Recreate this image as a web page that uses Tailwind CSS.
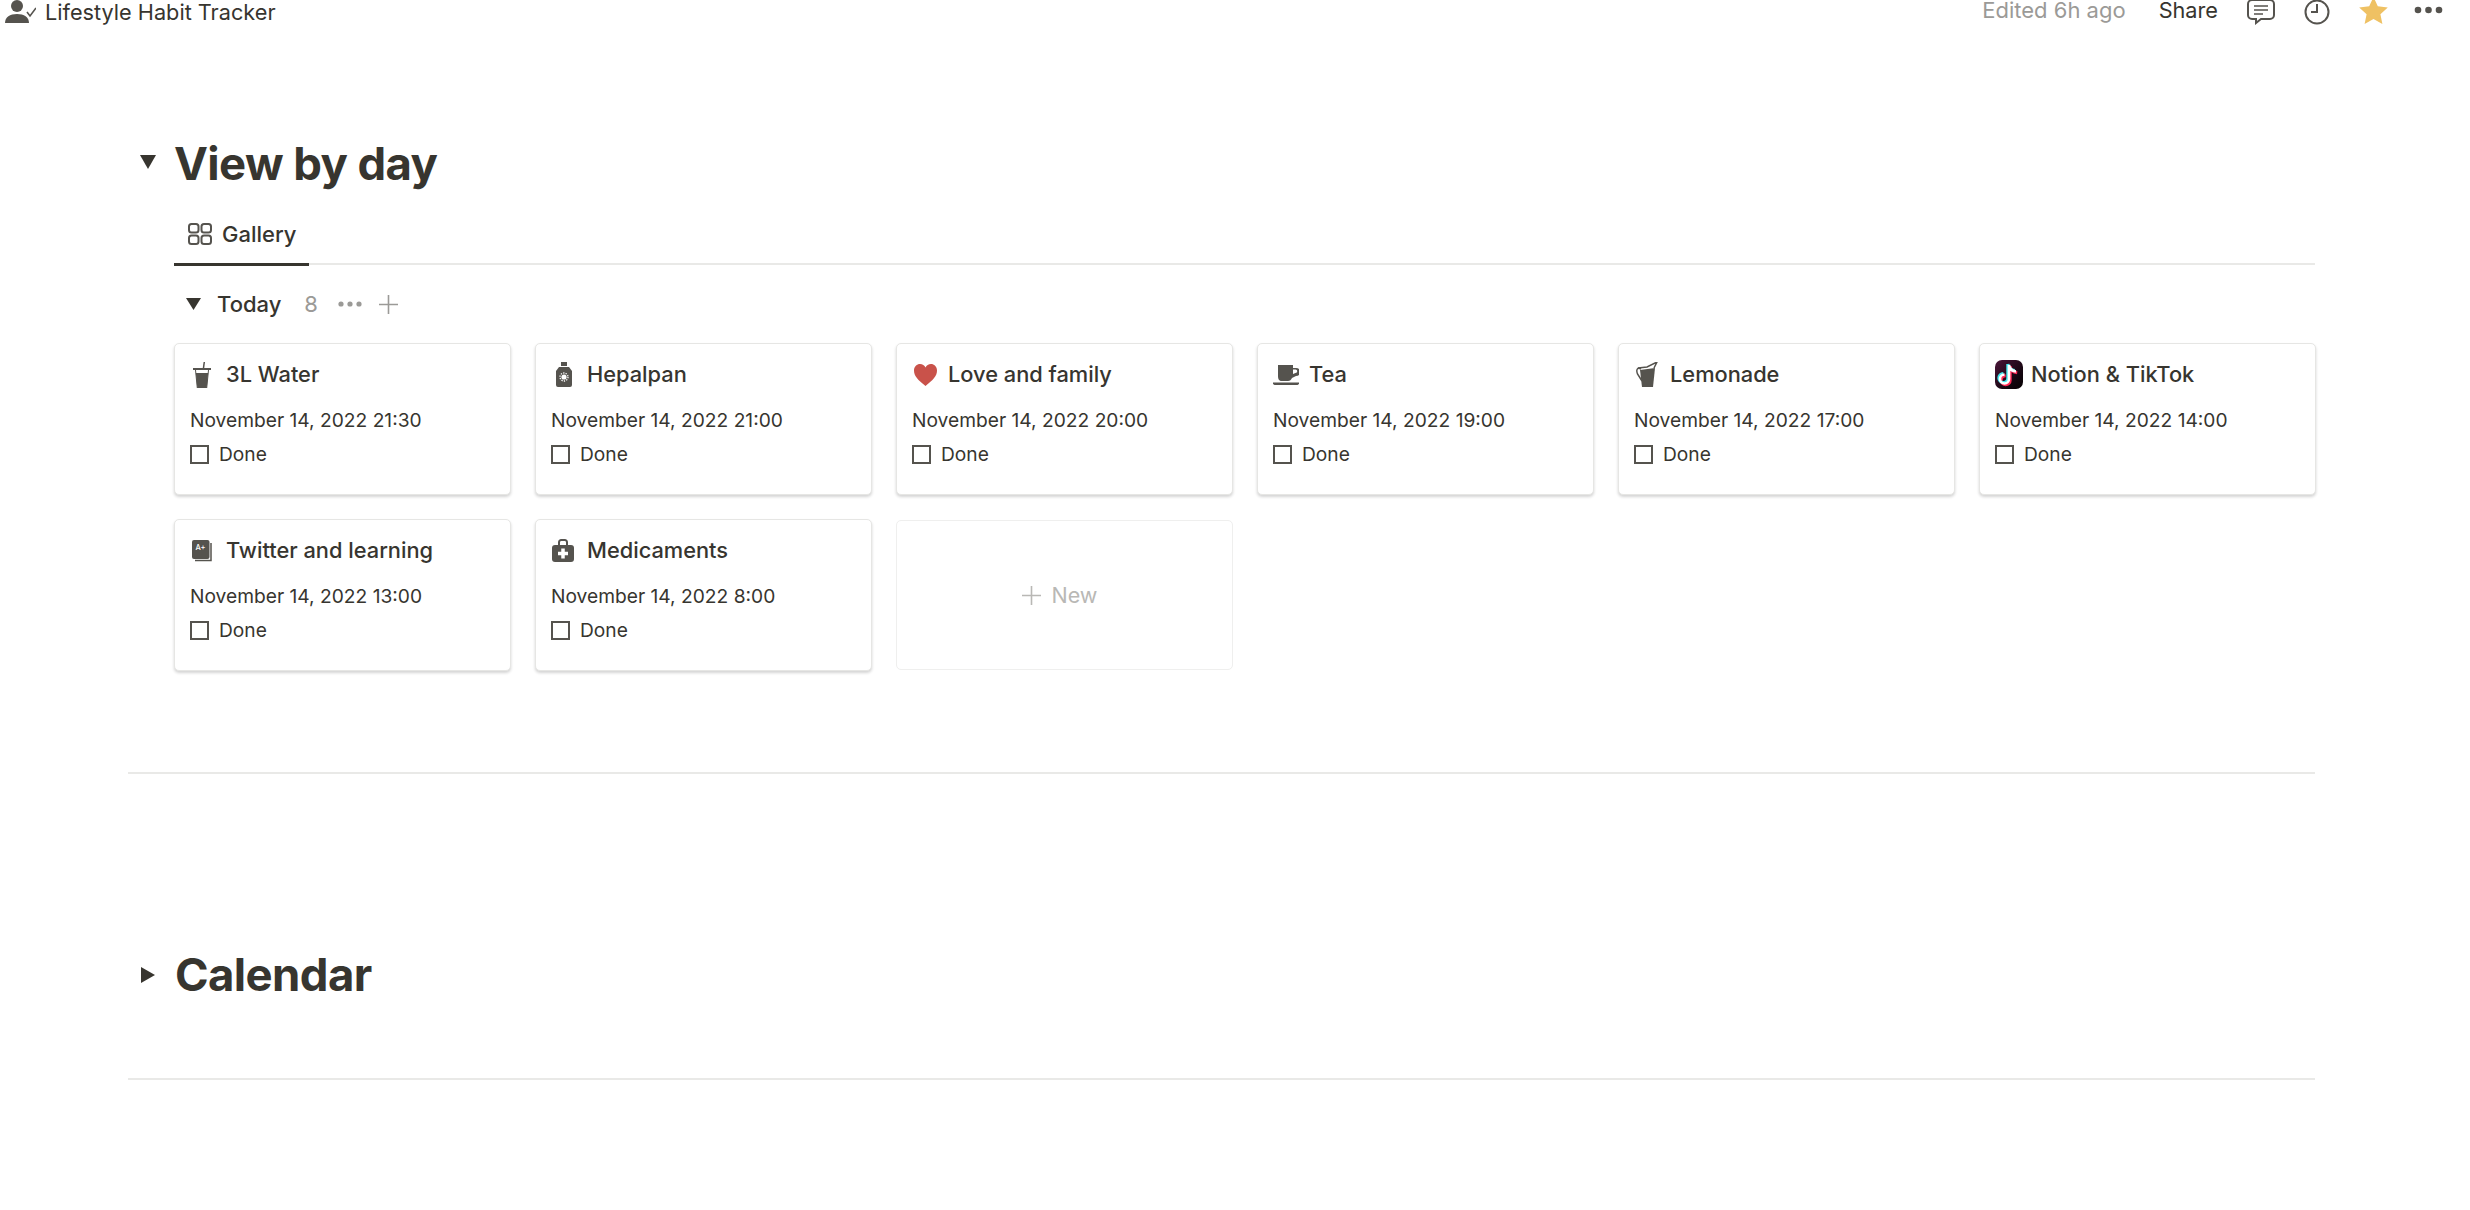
<!DOCTYPE html>
<html lang="en">
<head>
  <meta charset="UTF-8" />
  <title>Lifestyle Habit Tracker</title>
  <script src="https://cdn.jsdelivr.net/npm/@tailwindcss/browser@4"></script>
</head>
<body class="bg-white text-[#37352f] font-['Inter',sans-serif] w-[2470px] h-[1210px] overflow-hidden">
  <!-- top bar -->
  <header class="h-[24px] flex items-center pl-[4px] pr-[27px] text-[22px] leading-[24px]">
    <svg class="w-[32px] h-[24px] fill-[#55534e]" viewBox="0 0 32 24"><circle cx="13" cy="6" r="6"/><path d="M1 23c0-6 5-9 12-9s12 3 12 9z"/><path d="M23 12l3 4 6-8" fill="none" stroke="#55534e" stroke-width="1.6"/></svg>
    <span class="ml-[9px] pb-[1px] text-[21.7px]">Lifestyle Habit Tracker</span>
    <span class="ml-auto pb-[4px] text-[#9b9a97]">Edited 6h ago</span>
    <span class="ml-[33px] pb-[4px] text-[21.7px]">Share</span>
    <svg class="ml-[29px] w-[28px] h-[26px]" viewBox="0 0 28 26" fill="none" stroke="#55534e" stroke-width="2"><path d="M5 1h18a4 4 0 0 1 4 4v11a4 4 0 0 1-4 4H14l-5 4v-4H5a4 4 0 0 1-4-4V5a4 4 0 0 1 4-4z"/><path d="M7 7h14M7 11h14M7 15h9" stroke-width="1.6"/></svg>
    <svg class="ml-[29px] w-[26px] h-[26px]" viewBox="0 0 26 26" fill="none" stroke="#55534e" stroke-width="2"><circle cx="13" cy="13" r="11.5"/><path d="M13 5v8H7"/></svg>
    <svg class="ml-[29px] w-[29px] h-[26px]" viewBox="0 0 29 26"><path d="M14.5 -2l4.3 9.2 10 1.2-7.4 6.8 2 9.8-8.900-5-8.900 5 2-9.800L.2 8.400l10-1.200z" fill="#efc163"/></svg>
    <svg class="ml-[26px] mb-[4px] w-[29px] h-[8px] fill-[#55534e]" viewBox="0 0 29 8"><circle cx="4" cy="4" r="3.300"/><circle cx="14.500" cy="4" r="3.300"/><circle cx="25" cy="4" r="3.300"/></svg>
  </header>

  <main class="ml-[128px] w-[2187px]">
    <!-- View by day -->
    <section class="border-b-2 border-[#e9e9e7] h-[750px]">
      <div class="pt-[116px] flex items-center h-[164px]">
        <svg class="w-[16px] h-[14px] ml-[12px] mb-[4px] fill-[#37352f]" viewBox="0 0 16 14"><path d="M0 0h16L8 14z"/></svg>
        <h1 class="ml-[18px] text-[45.5px] leading-[56px] font-bold tracking-[-0.6px]">View by day</h1>
      </div>
      <div class="ml-[46px]">
        <div class="h-[77px] border-b-2 border-[#e9e9e7] flex">
          <div class="mt-[25px] w-[135px] h-[53px] border-b-[3px] border-[#37352f] flex items-start pl-[14px] pt-[8px] font-medium text-[22px] leading-[26px]">
            <svg class="w-[24px] h-[22px] mt-[2px]" viewBox="0 0 24 22" fill="none" stroke="#55534e" stroke-width="2"><rect x="1" y="1" width="9.500" height="8.500" rx="2.500"/><rect x="13.500" y="1" width="9.500" height="8.500" rx="2.500"/><rect x="1" y="12.500" width="9.500" height="8.500" rx="2.500"/><rect x="13.500" y="12.500" width="9.500" height="8.500" rx="2.500"/></svg>
            <span class="ml-[10px]">Gallery</span>
          </div>
        </div>
        <div class="h-[78px] flex items-center text-[22px]">
          <svg class="ml-[12px] w-[15px] h-[12px] fill-[#37352f]" viewBox="0 0 15 12"><path d="M0 0h15L7.500 12z"/></svg>
          <span class="ml-[16px] font-medium">Today</span>
          <span class="ml-[23px] text-[#9b9a97]">8</span>
          <svg class="ml-[20px] w-[24px] h-[6px] fill-[#9b9a97]" viewBox="0 0 24 6"><circle cx="3" cy="3" r="2.600"/><circle cx="12" cy="3" r="2.600"/><circle cx="21" cy="3" r="2.600"/></svg>
          <svg class="ml-[17px] w-[19px] h-[19px]" viewBox="0 0 19 19" stroke="#9b9a97" stroke-width="1.600"><path d="M9.500 0v19M0 9.500h19"/></svg>
        </div>
        <div class="grid grid-cols-[repeat(6,337px)] auto-rows-[152px] gap-[24px]">
          <article class="bg-white rounded-[5px] border border-[#e6e6e4] shadow-[0_2px_3px_rgba(15,15,15,0.18)] pl-[15px]">
            <div class="h-[59px] flex items-center pt-[2px] text-[21.8px] font-medium"><span class="w-[36px] flex"><svg class="ml-[3px] w-[18px] h-[26px]" viewBox="0 0 18 26"><path d="M10.500 6l.8-6" fill="none" stroke="#55534e" stroke-width="1.500"/><path d="M0 6h18v2H0z" fill="#55534e"/><path d="M2.500 8l1.800 18h9.400l1.800-18" fill="none" stroke="#55534e" stroke-width="1"/><path d="M2.800 11h12.400l-1.500 15H4.300z" fill="#55534e"/></svg></span><span>3L Water</span></div>
            <p class="text-[19.2px] leading-[24px] mt-[5px]">November 14, 2022 21:30</p>
            <div class="mt-[10px] flex items-center h-[24px] text-[19.2px]"><span class="w-[19px] h-[19px] border-2 border-[#55534e]"></span><span class="ml-[10px]">Done</span></div>
          </article>
          <article class="bg-white rounded-[5px] border border-[#e6e6e4] shadow-[0_2px_3px_rgba(15,15,15,0.18)] pl-[15px]">
            <div class="h-[59px] flex items-center pt-[2px] text-[21.8px] font-medium"><span class="w-[36px] flex"><svg class="ml-[5px] w-[16px] h-[25px]" viewBox="0 0 16 25"><path d="M5 0h6v4H5zM3 5h10l3 4v14a2 2 0 0 1-2 2H2a2 2 0 0 1-2-2V9z" fill="#55534e"/><circle cx="8" cy="15" r="2.600" fill="#fff"/><circle cx="8" cy="15" r="4" fill="none" stroke="#fff" stroke-width="1.300" stroke-dasharray="1.300 1.200"/></svg></span><span>Hepalpan</span></div>
            <p class="text-[19.2px] leading-[24px] mt-[5px]">November 14, 2022 21:00</p>
            <div class="mt-[10px] flex items-center h-[24px] text-[19.2px]"><span class="w-[19px] h-[19px] border-2 border-[#55534e]"></span><span class="ml-[10px]">Done</span></div>
          </article>
          <article class="bg-white rounded-[5px] border border-[#e6e6e4] shadow-[0_2px_3px_rgba(15,15,15,0.18)] pl-[15px]">
            <div class="h-[59px] flex items-center pt-[2px] text-[21.8px] font-medium"><span class="w-[36px] flex"><svg class="ml-[2px] w-[23px] h-[22px]" viewBox="0 0 23 22"><path d="M11.500 22C4 16 0 12 0 6.500 0 2.500 3 0 6 0c2.500 0 4.500 1.500 5.500 3.500C12.500 1.500 14.500 0 17 0c3 0 6 2.500 6 6.500C23 12 19 16 11.500 22z" fill="#c9524a"/></svg></span><span>Love and family</span></div>
            <p class="text-[19.2px] leading-[24px] mt-[5px]">November 14, 2022 20:00</p>
            <div class="mt-[10px] flex items-center h-[24px] text-[19.2px]"><span class="w-[19px] h-[19px] border-2 border-[#55534e]"></span><span class="ml-[10px]">Done</span></div>
          </article>
          <article class="bg-white rounded-[5px] border border-[#e6e6e4] shadow-[0_2px_3px_rgba(15,15,15,0.18)] pl-[15px]">
            <div class="h-[59px] flex items-center pt-[2px] text-[21.8px] font-medium"><span class="w-[36px] flex"><svg class="w-[26px] h-[20px] fill-[#55534e]" viewBox="0 0 26 20"><path d="M5 0h15v3h3a3 3 0 0 1 0 8l-4 2c-1 2-2 3-4 3H9c-3 0-4-2-4-5zM20 4.500V9l2.500-1a1.700 1.700 0 0 0 0-3.500z" fill-rule="evenodd"/><path d="M0 17.500h26V19c-1 1-2 1-3 1H3c-1 0-2 0-3-1z"/></svg></span><span>Tea</span></div>
            <p class="text-[19.2px] leading-[24px] mt-[5px]">November 14, 2022 19:00</p>
            <div class="mt-[10px] flex items-center h-[24px] text-[19.2px]"><span class="w-[19px] h-[19px] border-2 border-[#55534e]"></span><span class="ml-[10px]">Done</span></div>
          </article>
          <article class="bg-white rounded-[5px] border border-[#e6e6e4] shadow-[0_2px_3px_rgba(15,15,15,0.18)] pl-[15px]">
            <div class="h-[59px] flex items-center pt-[2px] text-[21.8px] font-medium"><span class="w-[36px] flex"><svg class="ml-[2px] w-[22px] h-[25px]" viewBox="0 0 22 25"><path d="M4 8l15-2-2 19H6z" fill="#55534e"/><path d="M2 6l9-1 10-5-3 6" fill="none" stroke="#55534e" stroke-width="1.500"/><path d="M5 7C1 5 0 8 1.500 12L6 19" fill="none" stroke="#55534e" stroke-width="1.500"/></svg></span><span>Lemonade</span></div>
            <p class="text-[19.2px] leading-[24px] mt-[5px]">November 14, 2022 17:00</p>
            <div class="mt-[10px] flex items-center h-[24px] text-[19.2px]"><span class="w-[19px] h-[19px] border-2 border-[#55534e]"></span><span class="ml-[10px]">Done</span></div>
          </article>
          <article class="bg-white rounded-[5px] border border-[#e6e6e4] shadow-[0_2px_3px_rgba(15,15,15,0.18)] pl-[14px]">
            <div class="h-[59px] flex items-center pt-[2px] text-[21.8px] font-medium"><span class="w-[37px] flex"><svg class="ml-[1px] w-[28px] h-[29px]" viewBox="0 0 28 29"><defs><linearGradient id="tt" x1="0" y1="0" x2="1" y2="1"><stop offset="0" stop-color="#4a1438"/><stop offset="0.7" stop-color="#14060f"/><stop offset="1" stop-color="#050203"/></linearGradient></defs><rect width="28" height="29" rx="7" fill="url(#tt)"/><path d="M14 5v14a4.500 4.500 0 1 1-4.500-4.500M14 5c.5 3.500 3 6 7 6.500" fill="none" stroke="#ff2a55" stroke-width="3" transform="translate(1.200 1.200)"/><path d="M14 5v14a4.500 4.500 0 1 1-4.500-4.500M14 5c.5 3.500 3 6 7 6.500" fill="none" stroke="#45e8ee" stroke-width="3" transform="translate(-1.200 -1)"/><path d="M14 5v14a4.500 4.500 0 1 1-4.500-4.500M14 5c.5 3.500 3 6 7 6.500" fill="none" stroke="#fff" stroke-width="2.600"/></svg></span><span>Notion &amp; TikTok</span></div>
            <p class="text-[19.2px] leading-[24px] mt-[5px] ml-[1px]">November 14, 2022 14:00</p>
            <div class="mt-[10px] ml-[1px] flex items-center h-[24px] text-[19.2px]"><span class="w-[19px] h-[19px] border-2 border-[#55534e]"></span><span class="ml-[10px]">Done</span></div>
          </article>
          <article class="bg-white rounded-[5px] border border-[#e6e6e4] shadow-[0_2px_3px_rgba(15,15,15,0.18)] pl-[15px]">
            <div class="h-[59px] flex items-center pt-[2px] text-[21.8px] font-medium"><span class="w-[36px] flex"><svg class="ml-[2px] w-[20px] h-[22px]" viewBox="0 0 20 22"><rect width="17.500" height="19" rx="2" fill="#55534e"/><path d="M19 3v17.500H3" fill="none" stroke="#55534e" stroke-width="1.500"/><text x="3.500" y="9.500" font-size="7.500" fill="#fff" font-family="Inter">A+</text></svg></span><span>Twitter and learning</span></div>
            <p class="text-[19.2px] leading-[24px] mt-[5px]">November 14, 2022 13:00</p>
            <div class="mt-[10px] flex items-center h-[24px] text-[19.2px]"><span class="w-[19px] h-[19px] border-2 border-[#55534e]"></span><span class="ml-[10px]">Done</span></div>
          </article>
          <article class="bg-white rounded-[5px] border border-[#e6e6e4] shadow-[0_2px_3px_rgba(15,15,15,0.18)] pl-[15px]">
            <div class="h-[59px] flex items-center pt-[2px] text-[21.8px] font-medium"><span class="w-[36px] flex"><svg class="ml-[1px] w-[22px] h-[23px]" viewBox="0 0 22 23"><path d="M6 6V3c0-2 2-3 3-3h4c1 0 3 1 3 3v3h-2V3.500c0-1-.5-1.500-1.500-1.500h-3C8.500 2 8 2.500 8 3.500V6z" fill="#55534e"/><rect y="6" width="22" height="17" rx="3" fill="#55534e"/><path d="M11 9.500v10M6 14.500h10" stroke="#fff" stroke-width="3.500"/></svg></span><span>Medicaments</span></div>
            <p class="text-[19.2px] leading-[24px] mt-[5px]">November 14, 2022 8:00</p>
            <div class="mt-[10px] flex items-center h-[24px] text-[19.2px]"><span class="w-[19px] h-[19px] border-2 border-[#55534e]"></span><span class="ml-[10px]">Done</span></div>
          </article>
          <div class="mt-[1px] h-[150px] rounded-[5px] border border-[#efefee] flex items-center justify-center text-[21.500px] text-[#b9b8b5] pr-[10px]">
            <svg class="w-[19px] h-[19px]" viewBox="0 0 19 19" stroke="#b9b8b5" stroke-width="1.600"><path d="M9.500 0v19M0 9.500h19"/></svg>
            <span class="ml-[11px]">New</span>
          </div>
        </div>
      </div>
    </section>

    <!-- Calendar -->
    <section class="border-b-2 border-[#e9e9e7] h-[306px]">
      <div class="pt-[173px] flex items-center">
        <svg class="ml-[13px] w-[14px] h-[16px] fill-[#37352f]" viewBox="0 0 14 16"><path d="M0 0l14 8L0 16z"/></svg>
        <h1 class="ml-[20px] text-[45.5px] leading-[56px] font-bold tracking-[-0.6px]">Calendar</h1>
      </div>
    </section>
  </main>
</body>
</html>
